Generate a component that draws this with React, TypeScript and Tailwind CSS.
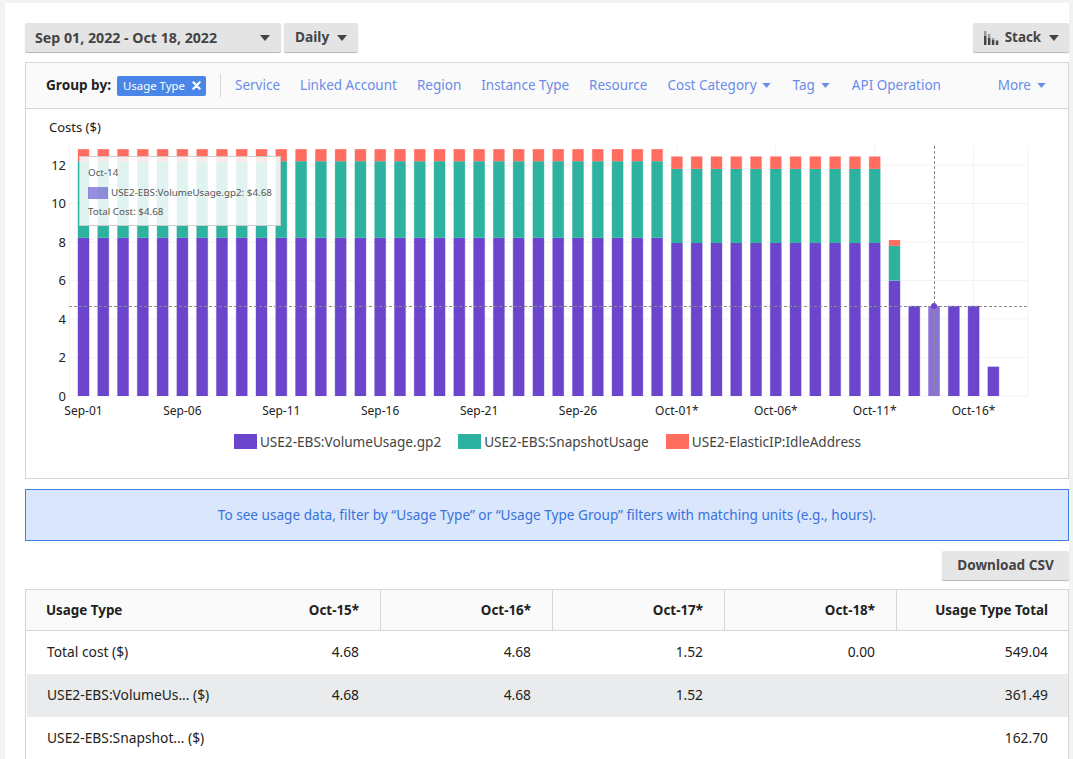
import type { ReactNode } from "react";

const font = "font-['Noto_Sans',sans-serif]";

function Caret({ className }: { className: string }) {
  return (
    <svg viewBox="0 0 10 6" className={className} fill="currentColor">
      <path d="M0 0h10L5 6z" />
    </svg>
  );
}

const PURPLE = "#6b46cc";
const TEAL = "#2eb2a0";
const RED = "#ff6c60";

const Y0 = 396;
const PER = 19.25;

const values: number[][] = [];
for (let i = 0; i < 30; i++) values.push([8.22, 3.98, 0.62]);
for (let i = 0; i < 11; i++) values.push([7.95, 3.85, 0.64]);
values.push([6.0, 1.8, 0.3]);
values.push([4.68, 0, 0]);
values.push([4.68, 0, 0]);
values.push([4.68, 0, 0]);
values.push([4.68, 0, 0]);
values.push([1.52, 0, 0]);

const xTicks = [
  [0, "Sep-01"],
  [5, "Sep-06"],
  [10, "Sep-11"],
  [15, "Sep-16"],
  [20, "Sep-21"],
  [25, "Sep-26"],
  [30, "Oct-01*"],
  [35, "Oct-06*"],
  [40, "Oct-11*"],
  [45, "Oct-16*"],
] as const;

const cx = (i: number) => 83.5 + i * 19.78;

function Chart() {
  return (
    <svg width={1042} height={282} viewBox="26 140 1042 282" className="block">
      {[0, 2, 4, 6, 8, 10, 12].map((v) => (
        <g key={v}>
          <line x1={69} x2={1028} y1={Y0 - v * PER} y2={Y0 - v * PER} stroke="#f3f3f3" strokeWidth={1} />
          <text x={66} y={Y0 - v * PER + 4.5} textAnchor="end" fontSize={13} fill="#222" fontFamily="Noto Sans">
            {v}
          </text>
        </g>
      ))}
      <line x1={69.5} x2={69.5} y1={146} y2={396} stroke="#f3f3f3" />
      <line x1={1028} x2={1028} y1={146} y2={396} stroke="#f3f3f3" />
      {xTicks.map(([i, label]) => (
        <g key={label}>
          <line x1={cx(i)} x2={cx(i)} y1={146} y2={396} stroke="#f3f3f3" />
          <text x={cx(i)} y={415} textAnchor="middle" fontSize={12} fill="#222" fontFamily="Noto Sans">
            {label}
          </text>
        </g>
      ))}
      {values.map(([a, b, c], i) => {
        const x = cx(i) - 5.5;
        const hi = i === 43;
        const h1 = a * PER;
        const h2 = b * PER;
        const h3 = c * PER;
        return (
          <g key={i}>
            <rect x={x - 0.5} y={Y0 - h1} width={12} height={h1} fill="#c3b4ea" />
            <rect x={x} y={Y0 - h1} width={11} height={h1} fill={hi ? "#8b72d6" : PURPLE} />
            {b > 0 && (
              <>
                <rect x={x - 0.5} y={Y0 - h1 - h2} width={12} height={h2} fill="#a8e0d8" />
                <rect x={x} y={Y0 - h1 - h2} width={11} height={h2} fill={TEAL} />
              </>
            )}
            {c > 0 && (
              <>
                <rect x={x - 0.5} y={Y0 - h1 - h2 - h3} width={12} height={h3} fill="#ffd0cc" />
                <rect x={x} y={Y0 - h1 - h2 - h3} width={11} height={h3} fill={RED} />
              </>
            )}
          </g>
        );
      })}
      <line x1={69} x2={1028} y1={306.5} y2={306.5} stroke="#8a8a8a" strokeDasharray="3 2" />
      <line x1={934.5} x2={934.5} y1={146} y2={396} stroke="#8a8a8a" strokeDasharray="3 2" />
      <circle cx={934} cy={306} r={3} fill={PURPLE} />
    </svg>
  );
}

function LegendItem({ color, label }: { color: string; label: string }) {
  return (
    <div className="flex items-center gap-[3px]">
      <span className="h-[15px] w-[23px]" style={{ background: color }} />
      <span className="text-[13.6px] leading-[15px] text-[#444]">{label}</span>
    </div>
  );
}

function Btn({ children, className }: { children: ReactNode; className: string }) {
  return (
    <button
      className={`flex h-[29px] items-center rounded-[2px] bg-[#e4e4e4] font-bold text-[#444] shadow-[0_1px_1px_rgba(0,0,0,0.3)] ${className}`}
    >
      {children}
    </button>
  );
}

const links = ["Service", "Linked Account", "Region", "Instance Type", "Resource"];

const rows = [
  { name: "Total cost ($)", v: ["4.68", "4.68", "1.52", "0.00"], total: "549.04", bg: "" },
  { name: "USE2-EBS:VolumeUs... ($)", v: ["4.68", "4.68", "1.52", ""], total: "361.49", bg: "bg-[#e9ebec]" },
  { name: "USE2-EBS:Snapshot... ($)", v: ["", "", "", ""], total: "162.70", bg: "" },
];

const heads = ["Oct-15*", "Oct-16*", "Oct-17*", "Oct-18*"];

export default function App() {
  return (
    <div className={`h-[759px] w-[1073px] overflow-hidden bg-[#f2f3f3] pt-[3px] pl-[5px] pr-[4px] ${font}`}>
      <div className="h-full bg-white pt-5 pl-5">
        {/* Top controls */}
        <div className="flex items-center justify-between">
          <div className="flex gap-[3px]">
            <Btn className="w-[256px] justify-between pl-[10px] pr-[11px] text-[14.2px] text-[#333]">
              <span>Sep 01, 2022 - Oct 18, 2022</span>
              <Caret className="h-[6px] w-[10px] text-[#444]" />
            </Btn>
            <Btn className="w-[74px] justify-between pl-[11px] pr-[11px] text-[13.7px]">
              <span>Daily</span>
              <Caret className="h-[6px] w-[10px] text-[#444]" />
            </Btn>
          </div>
          <Btn className="w-[96px] justify-between pl-[11px] pr-[10px] text-[13.4px]">
            <svg viewBox="0 0 16 14" className="h-[14px] w-[16px]">
              <path d="M0 0h2.5v5H0zM4 3h2.5v4H4zM8 7h2.5v2H8zM12 9h2.5v1H12z" fill="#999" />
              <path d="M0 5h2.5v9H0zM4 7h2.5v7H4zM8 9h2.5v5H8zM12 10h2.5v4H12z" fill="#444" />
            </svg>
            <span className="ml-[5px]">Stack</span>
            <Caret className="ml-[8px] h-[6px] w-[10px] text-[#444]" />
          </Btn>
        </div>

        {/* Chart panel */}
        <div className="mt-[10px] h-[417px] w-[1044px] border border-[#d5d5d5]">
          <div className="flex h-[46px] items-center border-b border-[#d5d5d5] bg-[#fafafa] pl-5 pr-[22px] text-[13.5px]">
            <span className="text-[13.6px] font-bold text-[#222]">Group by:</span>
            <span className="ml-[6px] flex h-5 w-[89px] items-center justify-between rounded-[2px] bg-[#4a86e8] pl-[6px] pr-[5px] text-[11.4px] text-white">
              Usage Type
              <svg viewBox="0 0 10 10" className="h-[9px] w-[9px]" stroke="white" strokeWidth={2.4} strokeLinecap="round">
                <path d="M1.5 1.5l7 7M8.5 1.5l-7 7" />
              </svg>
            </span>
            <span className="ml-[14px] h-[23px] w-px bg-[#d5d5d5]" />
            <div className="ml-[14px] flex flex-1 items-center gap-5 text-[#6b8ce8]">
              {links.map((l) => (
                <span key={l}>{l}</span>
              ))}
              <span className="flex items-center gap-[5px] pr-[2px]">
                Cost Category
                <Caret className="h-[5px] w-[9px]" />
              </span>
              <span className="flex items-center gap-[6px] pr-[2px]">
                Tag
                <Caret className="h-[5px] w-[9px]" />
              </span>
              <span>API Operation</span>
              <span className="ml-auto flex items-center gap-[6px]">
                More
                <Caret className="h-[5px] w-[9px]" />
              </span>
            </div>
          </div>

          <div className="relative">
            <div className="pt-[9px] pl-[23px] text-[13px] leading-[18px] text-[#222]">Costs ($)</div>
            <div className="mt-[4px]">
              <Chart />
            </div>
            {/* Tooltip */}
            <div className="absolute top-[47px] left-[53px] h-[70px] w-[202px] border border-[#ccc] bg-white/85 pt-[9px] pl-[8px] text-[9.8px] leading-[14px] text-[#555]">
              <div>Oct-14</div>
              <div className="mt-[6px] flex items-center gap-[3px]">
                <span className="h-3 w-5 bg-[#6b60d0]/70" />
                <span>USE2-EBS:VolumeUsage.gp2: $4.68</span>
              </div>
              <div className="mt-[5px]">Total Cost: $4.68</div>
            </div>
            <div className="mt-[12px] flex justify-center gap-[17px] pl-[1px]">
              <LegendItem color={PURPLE} label="USE2-EBS:VolumeUsage.gp2" />
              <LegendItem color={TEAL} label="USE2-EBS:SnapshotUsage" />
              <LegendItem color={RED} label="USE2-ElasticIP:IdleAddress" />
            </div>
          </div>
        </div>

        {/* Info banner */}
        <div className="mt-[10px] flex h-[52px] w-[1044px] items-center justify-center border border-[#3f7fe8] bg-[#d9e6fb] text-[13.6px] text-[#3a72dc]">
          To see usage data, filter by “Usage Type” or “Usage Type Group” filters with matching units (e.g., hours).
        </div>

        <div className="mt-[10px] flex justify-end">
          <Btn className="w-[127px] justify-center bg-[#e6e6e6] text-[13.6px]">Download CSV</Btn>
        </div>

        {/* Table */}
        <div className="mt-[9px] w-[1044px] border-x border-t border-[#d5d5d5] text-[13.8px] text-[#222]">
          <div className="grid h-[41px] grid-cols-[354px_172px_172px_172px_172px] items-stretch border-b border-[#d5d5d5] bg-[#fafafa] text-[13.4px] font-bold">
            <div className="flex items-center justify-between pr-[21px] pl-5">
              <span>Usage Type</span>
              <span>{heads[0]}</span>
            </div>
            {heads.slice(1).map((h) => (
              <div key={h} className="flex items-center justify-end border-l border-[#d5d5d5] pr-[21px]">
                {h}
              </div>
            ))}
            <div className="flex items-center justify-end border-l border-[#d5d5d5] pr-5">Usage Type Total</div>
          </div>
          {rows.map((r) => (
            <div key={r.name} className={`ml-px grid h-[43px] grid-cols-[353px_172px_172px_172px_172px] items-center ${r.bg}`}>
              <div className="flex justify-between pr-[21px] pl-5">
                <span>{r.name}</span>
                <span>{r.v[0]}</span>
              </div>
              <div className="pr-[21px] text-right">{r.v[1]}</div>
              <div className="pr-[21px] text-right">{r.v[2]}</div>
              <div className="pr-[21px] text-right">{r.v[3]}</div>
              <div className="pr-5 text-right">{r.total}</div>
            </div>
          ))}
        </div>
      </div>
    </div>
  );
}
